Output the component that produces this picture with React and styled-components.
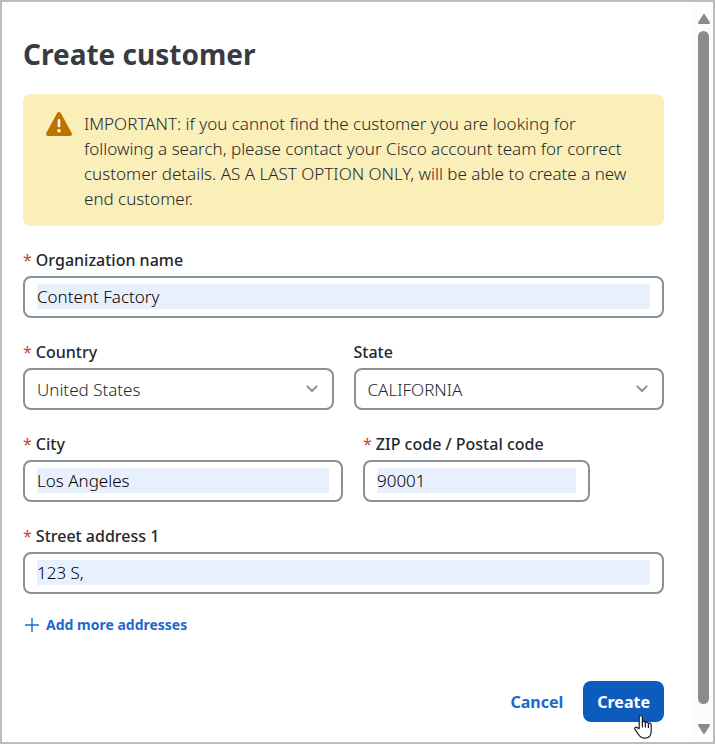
// CreateCustomer.js
import React, { useState } from 'react';
import styled, { createGlobalStyle } from 'styled-components';

const countries = ['United States', 'Canada', 'Mexico'];
const states = ['CALIFORNIA', 'NEVADA', 'OREGON'];

const Field = ({ id, label, required, children }) => (
  <FieldWrapper>
    <Label htmlFor={id}>
      {required && <Required>*</Required>}
      {label}
    </Label>
    {children}
  </FieldWrapper>
);

const TextField = ({ id, label, value, onChange }) => (
  <Field id={id} label={label} required>
    <Control>
      <Input id={id} name={id} type="text" value={value} onChange={onChange} required />
    </Control>
  </Field>
);

const SelectField = ({ id, label, required, value, onChange, options }) => (
  <Field id={id} label={label} required={required}>
    <Control>
      <Select id={id} name={id} value={value} onChange={onChange} required={required}>
        {options.map((option) => (
          <option key={option} value={option}>{option}</option>
        ))}
      </Select>
      <Chevron viewBox="0 0 14 10" aria-hidden="true">
        <path d="M2.4 2.4 L7 7 L11.6 2.4" />
      </Chevron>
    </Control>
  </Field>
);

const App = () => {
  const [customer, setCustomer] = useState({
    organization: 'Content Factory',
    country: 'United States',
    state: 'CALIFORNIA',
    city: 'Los Angeles',
    zip: '90001',
    street: '123 S,',
  });

  const handleChange = (event) => {
    const { name, value } = event.target;
    setCustomer({ ...customer, [name]: value });
  };

  const handleSubmit = (event) => {
    event.preventDefault();
  };

  return (
    <Panel>
      <GlobalStyle />
      <Form onSubmit={handleSubmit}>
        <Title>Create customer</Title>

        <Alert role="note">
          <AlertIcon viewBox="0 0 26 24" aria-hidden="true">
            <path
              d="M11.2 1.1 C12 -0.3 14 -0.3 14.8 1.1 L25.7 21 C26.4 22.4 25.6 24 24 24 H2 C0.4 24 -0.4 22.4 0.3 21 Z"
              fill="#bf7200"
            />
            <path d="M13 8.4 V14" stroke="#fff" strokeWidth="2.6" strokeLinecap="round" />
            <circle cx="13" cy="18.8" r="1.8" fill="#fff" />
          </AlertIcon>
          <AlertText>
            IMPORTANT: if you cannot find the customer you are looking for following a search,
            please contact your Cisco account team for correct customer details. AS A LAST OPTION
            ONLY, will be able to create a new end customer.
          </AlertText>
        </Alert>

        <Fields>
          <TextField
            id="organization"
            label="Organization name"
            value={customer.organization}
            onChange={handleChange}
          />
          <HalfRow>
            <SelectField
              id="country"
              label="Country"
              required
              value={customer.country}
              onChange={handleChange}
              options={countries}
            />
            <SelectField
              id="state"
              label="State"
              value={customer.state}
              onChange={handleChange}
              options={states}
            />
          </HalfRow>
          <CityRow>
            <TextField id="city" label="City" value={customer.city} onChange={handleChange} />
            <TextField
              id="zip"
              label="ZIP code / Postal code"
              value={customer.zip}
              onChange={handleChange}
            />
          </CityRow>
          <TextField
            id="street"
            label="Street address 1"
            value={customer.street}
            onChange={handleChange}
          />
        </Fields>

        <AddButton type="button">
          <PlusIcon viewBox="0 0 14 14" aria-hidden="true">
            <path d="M7 0 V14 M0 7 H14" />
          </PlusIcon>
          Add more addresses
        </AddButton>

        <Footer>
          <CancelButton type="button">Cancel</CancelButton>
          <CreateButton type="submit">
            Create
            <Pointer viewBox="0 0 18 24" aria-hidden="true">
              <path d="M5.2 13.6 V2.4 C5.2 0.2 8.4 0.2 8.4 2.4 V7.6 C8.6 5.9 11.3 6 11.4 7.9 C11.8 6.6 14.3 6.8 14.4 8.7 C14.9 7.6 17.2 7.9 17.2 10 V16 C17.2 20.6 14.6 23.2 10.8 23.2 C7.6 23.2 6 22 4.8 19.8 L1 14.4 C0 12.8 1.8 11.6 3.2 12.6 Z" />
              <path d="M8.4 7 V12 M11.4 7.6 V12 M14.4 8.6 V12.4" />
            </Pointer>
          </CreateButton>
        </Footer>
      </Form>

      <ScrollTrack aria-hidden="true">
        <ScrollArrow viewBox="0 0 12 10">
          <path d="M6 1 L11 9 H1 Z" />
        </ScrollArrow>
        <ScrollThumb />
        <ScrollArrow viewBox="0 0 12 10">
          <path d="M6 9 L11 1 H1 Z" />
        </ScrollArrow>
      </ScrollTrack>
    </Panel>
  );
};

// Styled Components
const GlobalStyle = createGlobalStyle`
  * {
    box-sizing: border-box;
  }

  body {
    margin: 0;
    background: #fff;
    color: #23282e;
    font-family: 'Noto Sans', 'Open Sans', sans-serif;
    font-size: 17px;
    font-weight: 300;
    line-height: 25px;
  }

  button, input, select {
    font: inherit;
  }
`;

const Panel = styled.main`
  display: flex;
  min-height: 100vh;
  border: 2px solid #bcbcbc;
`;

const Form = styled.form`
  flex: 1;
  min-width: 0;
  display: flex;
  flex-direction: column;
  padding: 32px 30px 20px 21px;
`;

const Title = styled.h1`
  margin: 0 0 20px;
  color: #373c42;
  font-size: 28px;
  font-weight: 700;
  line-height: 40px;
`;

const Alert = styled.div`
  display: flex;
  gap: 12px;
  padding: 17px 24px 15px 23px;
  border-radius: 8px;
  background: #faeeb9;
`;

const AlertIcon = styled.svg`
  flex: none;
  width: 26px;
  height: 24px;
  margin-top: 1px;
`;

const AlertText = styled.p`
  margin: 0;
`;

const Fields = styled.div`
  display: flex;
  flex-direction: column;
  gap: 22px;
  margin-top: 22px;
`;

const HalfRow = styled.div`
  display: grid;
  grid-template-columns: 1fr 1fr;
  gap: 20px;
`;

const CityRow = styled.div`
  display: grid;
  grid-template-columns: 320fr 227fr 54fr;
  gap: 20px;
`;

const FieldWrapper = styled.div`
  min-width: 0;
`;

const Label = styled.label`
  display: block;
  margin-bottom: 4px;
  font-size: 16px;
  font-weight: 500;
  line-height: 24px;
`;

const Required = styled.span`
  margin-right: 4px;
  color: #c3442f;
  font-weight: 400;
`;

const Control = styled.div`
  position: relative;
  padding: 6px 12px;
  height: 42px;
  border: 2px solid #889099;
  border-radius: 8px;
  background: #fff;
`;

const Input = styled.input`
  display: block;
  width: 100%;
  height: 25px;
  padding: 0;
  border: none;
  outline: none;
  background: #e8f0fe;
  color: #000;
`;

const Select = styled.select`
  display: block;
  width: 100%;
  height: 26px;
  padding: 0;
  border: none;
  outline: none;
  appearance: none;
  background: transparent;
  color: #23282e;
`;

const Chevron = styled.svg`
  position: absolute;
  top: 14px;
  right: 13px;
  width: 14px;
  height: 10px;
  fill: none;
  stroke: #889099;
  stroke-width: 2;
  stroke-linecap: round;
  stroke-linejoin: round;
  pointer-events: none;
`;

const TextButton = styled.button`
  padding: 0;
  border: none;
  background: none;
  color: #1d69cc;
  font-size: 16px;
  font-weight: 700;
  cursor: pointer;
`;

const AddButton = styled(TextButton)`
  display: flex;
  align-items: center;
  align-self: flex-start;
  gap: 7px;
  margin: 18px 0 0 2px;
  font-size: 14px;
`;

const PlusIcon = styled.svg`
  width: 14px;
  height: 14px;
  stroke: #1d69cc;
  stroke-width: 1.4;
`;

const Footer = styled.div`
  display: flex;
  justify-content: flex-end;
  align-items: baseline;
  gap: 20px;
  margin-top: auto;
  padding-top: 20px;
`;

const CancelButton = styled(TextButton)``;

const CreateButton = styled(TextButton)`
  position: relative;
  padding: 9px 14px 7px;
  border-radius: 8px;
  background: #0d5cbd;
  color: #fff;
`;

const Pointer = styled.svg`
  position: absolute;
  right: 12px;
  bottom: -17px;
  width: 18px;
  height: 24px;
  fill: #fff;
  stroke: #1c1c28;
  stroke-width: 1.2;
  stroke-linecap: round;
  stroke-linejoin: round;
`;

const ScrollTrack = styled.div`
  flex: none;
  display: flex;
  flex-direction: column;
  align-items: center;
  width: 19px;
  padding: 12px 0 8px;
  background: #fcfcfc;
`;

const ScrollArrow = styled.svg`
  width: 12px;
  height: 10px;
  fill: #8b8b8b;
  stroke: #8b8b8b;
  stroke-width: 2;
  stroke-linejoin: round;
`;

const ScrollThumb = styled.div`
  flex: 1;
  width: 11px;
  margin: 7px 0 20px;
  border-radius: 6px;
  background: #8b8b8b;
`;

export default App;
